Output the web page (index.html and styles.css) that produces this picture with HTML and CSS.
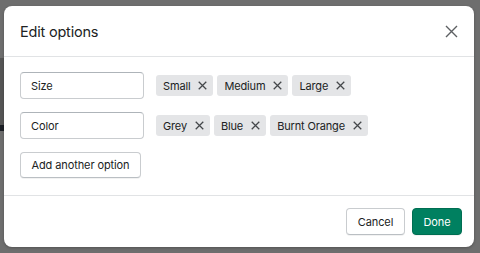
FILE: index.html
```html
<!DOCTYPE html>
<html>
<head>
<meta charset="utf-8">
<link rel="stylesheet" href="styles.css">
</head>
<body>
<div class="backdrop">
  <div class="dialog">
    <div class="header">
      <h2 class="title">Edit options</h2>
      <button class="close" aria-label="Close">
        <svg width="13" height="13" viewBox="0 0 13 13"><path d="M1 1L12 12M12 1L1 12" stroke="#5c5f62" stroke-width="1.4" fill="none"/></svg>
      </button>
    </div>
    <div class="body">
      <div class="row">
        <div class="input">Size</div>
        <div class="tags">
          <span class="tag">Small<svg class="x" viewBox="0 0 10 10"><path d="M0.8 0.8L9.2 9.2M9.2 0.8L0.8 9.2"/></svg></span>
          <span class="tag">Medium<svg class="x" viewBox="0 0 10 10"><path d="M0.8 0.8L9.2 9.2M9.2 0.8L0.8 9.2"/></svg></span>
          <span class="tag">Large<svg class="x" viewBox="0 0 10 10"><path d="M0.8 0.8L9.2 9.2M9.2 0.8L0.8 9.2"/></svg></span>
        </div>
      </div>
      <div class="row">
        <div class="input">Color</div>
        <div class="tags">
          <span class="tag">Grey<svg class="x" viewBox="0 0 10 10"><path d="M0.8 0.8L9.2 9.2M9.2 0.8L0.8 9.2"/></svg></span>
          <span class="tag">Blue<svg class="x" viewBox="0 0 10 10"><path d="M0.8 0.8L9.2 9.2M9.2 0.8L0.8 9.2"/></svg></span>
          <span class="tag">Burnt Orange<svg class="x" viewBox="0 0 10 10"><path d="M0.8 0.8L9.2 9.2M9.2 0.8L0.8 9.2"/></svg></span>
        </div>
      </div>
      <div class="row">
        <button class="btn add">Add another option</button>
      </div>
    </div>
    <div class="footer">
      <button class="btn cancel">Cancel</button>
      <button class="btn done">Done</button>
    </div>
  </div>
</div>
</body>
</html>
```

FILE: styles.css
```css
html, body {
  margin: 0;
  padding: 0;
}
body {
  width: 480px;
  height: 253px;
  overflow: hidden;
  background: #6e6e6e;
  font-family: Inter, "Liberation Sans", sans-serif;
  color: #202223;
}
.backdrop {
  padding: 6px 0 0 4px;
  background: linear-gradient(to bottom, #6e6e6e 0, #6e6e6e 58px, #555 58px, #555 125px, #1c1f26 125px, #1c1f26 131px, #6e6e6e 131px);
  background-size: 4px 100%;
  background-repeat: no-repeat;
  height: 247px;
}
.dialog {
  width: 470px;
  height: 241px;
  background: #fff;
  border-radius: 8px;
  box-shadow: 0 1px 3px rgba(0,0,0,0.25);
  display: flex;
  flex-direction: column;
  overflow: hidden;
}
.header {
  height: 51px;
  box-sizing: border-box;
  padding: 0 16px;
  display: flex;
  align-items: center;
  justify-content: space-between;
  border-bottom: 1px solid #e1e3e5;
}
.title {
  margin: 0;
  font-size: 14.5px;
  font-weight: 400;
  letter-spacing: -0.2px;
  color: #202223;
}
.close {
  border: 0;
  background: none;
  padding: 0;
  width: 13px;
  height: 13px;
  display: flex;
}
.body {
  padding: 15px 16px 15px 16px;
  display: flex;
  flex-direction: column;
  gap: 13px;
  flex: 1;
}
.row {
  display: flex;
  align-items: center;
  gap: 12px;
}
.input {
  width: 124px;
  height: 27px;
  box-sizing: border-box;
  border: 1px solid #c9cccf;
  border-top-color: #aeb4b9;
  border-radius: 4px;
  padding: 0 10px;
  display: flex;
  align-items: center;
  font-size: 11px;
  letter-spacing: -0.1px;
  color: #202223;
}
.tags {
  display: flex;
  gap: 4px;
}
.tag {
  height: 21px;
  box-sizing: border-box;
  background: #e4e5e7;
  border-radius: 3px;
  padding: 0 6px 0 7px;
  display: flex;
  align-items: center;
  gap: 8px;
  font-size: 11px;
  letter-spacing: -0.15px;
  color: #202223;
}
.x {
  width: 9px;
  height: 9px;
  stroke: #44474a;
  stroke-width: 1.4;
  fill: none;
}
.btn {
  font-family: Inter, "Liberation Sans", sans-serif;
  font-size: 11px;
  letter-spacing: -0.1px;
  height: 27px;
  box-sizing: border-box;
  border-radius: 4px;
  background: #fff;
  border: 1px solid #c9cccf;
  border-bottom-color: #babfc3;
  color: #202223;
  padding: 0;
  box-shadow: 0 1px 0 rgba(0,0,0,0.05);
}
.add {
  width: 121px;
  height: 26px;
}
.footer {
  border-top: 1px solid #e1e3e5;
  padding: 12px 12px 12px 12px;
  display: flex;
  justify-content: flex-end;
  gap: 7px;
}
.cancel {
  width: 59px;
}
.done {
  width: 50px;
  background: #008060;
  border-color: #006e52;
  color: #fff;
}
```
